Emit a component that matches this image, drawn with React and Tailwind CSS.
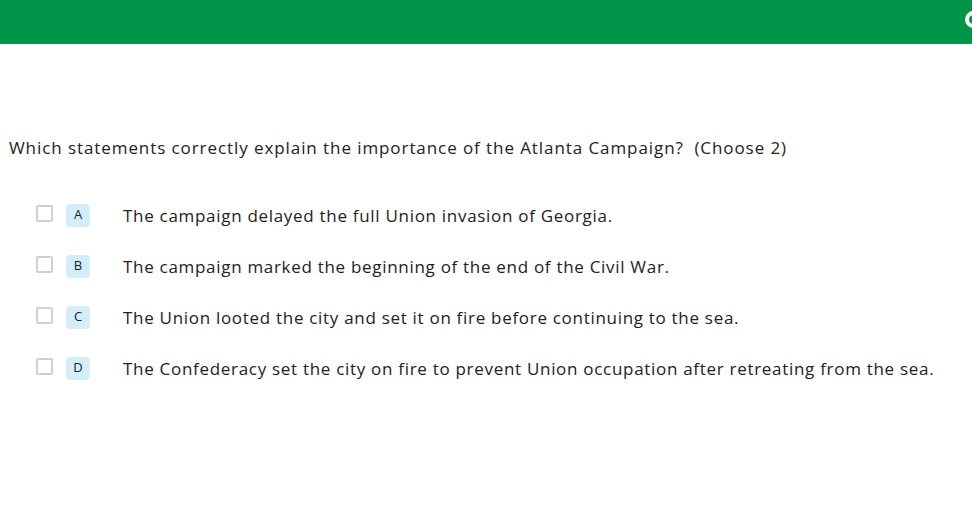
const options = [
  { key: 'A', text: 'The campaign delayed the full Union invasion of Georgia.' },
  { key: 'B', text: 'The campaign marked the beginning of the end of the Civil War.' },
  { key: 'C', text: 'The Union looted the city and set it on fire before continuing to the sea.' },
  { key: 'D', text: 'The Confederacy set the city on fire to prevent Union occupation after retreating from the sea.' },
]

export default function App() {
  return (
    <div className="w-[972px] h-[530px] bg-white overflow-hidden text-[#222] font-['Open_Sans',sans-serif]">
      {/* top bar */}
      <div className="relative h-[44px] bg-[#009548]">
        <div className="absolute right-[-10px] top-[11px] w-[17px] h-[17px] rounded-full border-[4px] border-white" />
      </div>

      <div className="pt-[92px] pl-[9px]">
        <p className="text-[17px] leading-[24px] tracking-[0.92px] whitespace-pre">
          Which statements correctly explain the importance of the Atlanta Campaign?  (Choose 2)
        </p>

        <div className="mt-[43px] pl-[27px] flex flex-col gap-[27px]">
          {options.map((o) => (
            <div key={o.key} className="flex items-center h-[24px]">
              <div className="w-[17px] h-[17px] border-2 border-[#d0d0d0] rounded-[2px] -mt-[3px]" />
              <div className="ml-[13px] w-[24px] h-[23px] rounded-[4px] bg-[#d4eef9] flex items-center justify-center text-[13px]">
                {o.key}
              </div>
              <span className="ml-[33px] text-[17px] leading-[24px] tracking-[0.7px] mt-[2px]">{o.text}</span>
            </div>
          ))}
        </div>
      </div>
    </div>
  )
}
